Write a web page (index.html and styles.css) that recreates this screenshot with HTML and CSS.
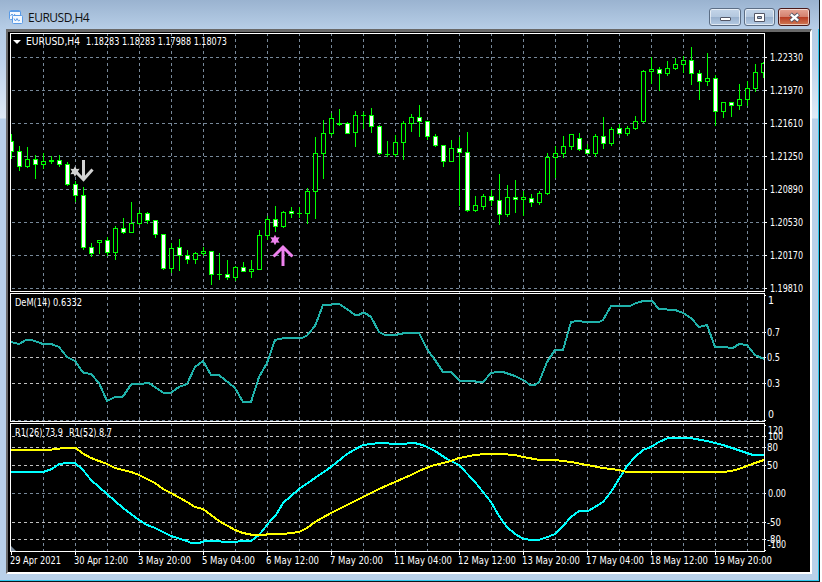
FILE: index.html
```
<!DOCTYPE html>
<html lang="en">
<head>
    <meta charset="UTF-8">
    <meta name="viewport" content="width=device-width, initial-scale=1.0">
    <title>EURUSD,H4</title>
    <link rel="stylesheet" href="styles.css">
</head>
<body>
    <div class="window">
        <div class="titlebar">
            <svg class="app-icon" width="14" height="14" viewBox="0 0 14 14">
                <rect x="0.5" y="0.5" width="11" height="9" rx="1" fill="#f4f9ff" stroke="#5a9be6"/>
                <path d="M1 1.500h10" stroke="#5a9be6"/>
                <path d="M1.500 6l1.500-2 1.500 2 1.500-2" fill="none" stroke="#5a9be6"/>
                <rect x="3.500" y="5.500" width="10" height="8" rx="1" fill="#f4f9ff" stroke="#5a9be6"/>
                <path d="M5 8.500l1.500 2.500 1.500-2.500 1.500 2.500 1.500-1" fill="none" stroke="#5a9be6"/>
            </svg>
            <span class="title">EURUSD,H4</span>
            <div class="buttons">
                <button class="btn" aria-label="Minimize">
                    <svg width="13" height="11" viewBox="0 0 13 11"><rect x="1.500" y="5.500" width="10" height="3" rx="0.500" fill="#fff" stroke="#535666"/></svg>
                </button>
                <button class="btn" aria-label="Maximize">
                    <svg width="13" height="11" viewBox="0 0 13 11"><path d="M1.500 1.500h10v8h-10zM4.500 4.500v2h4v-2z" fill="#fff" fill-rule="evenodd" stroke="#535666"/></svg>
                </button>
                <button class="btn close" aria-label="Close">
                    <svg width="13" height="11" viewBox="0 0 13 11"><path d="M2.500 2l8 7M10.500 2l-8 7" stroke="#535666" stroke-width="4"/><path d="M2.800 2.300l7.400 6.400M10.200 2.300l-7.400 6.400" stroke="#fff" stroke-width="2.300"/></svg>
                </button>
            </div>
        </div>
        <div class="client">
            <svg class="chart" id="chart" width="802" height="540" viewBox="8 32 802 540"></svg>
        </div>
    </div>
    <script src="chart.js"></script>
</body>
</html>
```
FILE: styles.css
```
body {
    margin: 0;
    background: #fff;
    overflow: hidden;
}

.window {
    box-sizing: border-box;
    width: 820px;
    height: 582px;
    padding-left: 6px;
    border-right: 1px solid #101418;
    border-bottom: 1px solid #101418;
    box-shadow: inset -1px -1px 0 #2fc8ee;
    background: linear-gradient(#9ab3d0 0, #b5cce5 28px, #bdd2ea 60px, #dfeaf6 118px, #b9d1ea 119px);
}

.titlebar {
    display: flex;
    align-items: center;
    height: 29px;
    padding: 0 9px 0 3px;
    background: linear-gradient(#9ab3d0, #b7cee7);
}

.app-icon {
    margin-top: 5px;
}

.title {
    margin: 6px 0 0 5px;
    font: 12px "Open Sans", "Noto Sans", sans-serif;
    letter-spacing: -0.5px;
    color: #111;
}

.buttons {
    display: flex;
    gap: 3px;
    margin-left: auto;
    padding-top: 5px;
}

.btn {
    display: flex;
    align-items: center;
    justify-content: center;
    box-sizing: border-box;
    width: 32px;
    height: 18px;
    padding: 0;
    border: 1px solid #5c6e85;
    border-radius: 3px;
    box-shadow: inset 0 0 0 1px rgba(255, 255, 255, 0.6);
    background: linear-gradient(#c4d5e9 0, #b4c8df 48%, #98b0cd 50%, #b5cbe3 100%);
}

.btn:nth-child(2) {
    width: 31px;
}

.close {
    border-color: #4a1a1a;
    background: linear-gradient(#e6a595 0, #d4816f 48%, #b83a22 50%, #cf7a55 100%);
}

.client {
    width: 802px;
    height: 540px;
    border: 2px solid #fff;
    border-top: 3px solid #696969;
    border-left-color: #696969;
    background: #000;
}

.chart {
    display: block;
    font-family: "DejaVu Sans Condensed", "DejaVu Sans", sans-serif;
    font-size: 11px;
    fill: #fff;
}

.grid {
    stroke: #778899;
    stroke-dasharray: 3 3;
}

.level {
    stroke: #c0c0c0;
    stroke-dasharray: 3 3;
}

.grid, .level, .frame, .tick, .wick, .up, .down {
    fill: none;
    shape-rendering: crispEdges;
}

.frame, .tick {
    stroke: #fff;
}

.wick, .up, .down {
    stroke: #0f0;
}

.up {
    fill: #000;
}

.down {
    fill: #fff;
}

.line {
    fill: none;
    stroke-width: 2;
    shape-rendering: crispEdges;
}

.dem {
    stroke: #20b2aa;
}

.fast {
    stroke: #0ff;
}

.slow {
    stroke: #ff0;
}

.sell {
    stroke: #d3d3d3;
    fill: #d3d3d3;
}

.buy {
    stroke: #ee82ee;
    fill: #ee82ee;
}

.arrow {
    fill: none;
    stroke-width: 3;
}

.star {
    stroke: none;
}
```
FILE: chart.js
```
const chart = document.getElementById('chart');

function add(tag, attrs, text) {
    const el = document.createElementNS('http://www.w3.org/2000/svg', tag);
    for (const key in attrs) {
        el.setAttribute(key, attrs[key]);
    }
    if (text) {
        el.textContent = text;
    }
    chart.appendChild(el);
    return el;
}

function hline(cls, y, x1 = 12, x2 = 764) {
    add('path', { class: cls, d: `M${x1} ${y + 0.5}H${x2}` });
}

function vline(cls, x, y1, y2) {
    add('path', { class: cls, d: `M${x + 0.5} ${y1}V${y2}` });
}

function label(text, x, y, width) {
    add('text', { x: x, y: y, textLength: width, lengthAdjust: 'spacingAndGlyphs' }, text);
}

// top and bottom of the three panes
const panes = [[33, 291], [293, 421], [423, 551]];

for (let x = 43; x < 764; x += 32) {
    vline('grid', x, 33, 551);
}

const prices = ['1.22330', '1.21970', '1.21610', '1.21250', '1.20890', '1.20530', '1.20170', '1.19810'];
prices.forEach((price, i) => {
    const y = 57 + i * 33;
    hline('grid', y);
    hline('tick', y, 765, 767);
    label(price, 770, y + 4, 33);
});

hline('grid', 420);
hline('grid', 493);
[332, 357, 383, 436, 447, 465, 522, 539].forEach(y => hline('level', y));
[295, 332, 357, 383, 420, 425, 436, 447, 465, 493, 522, 539, 550].forEach(y => hline('tick', y, 765, 766));

// high, body top, body bottom, low; 1 = rising
const candles = [
    [134,141,152,159,0], [146,151,167,171,0], [147,159,167,168,1], [155,159,165,179,0], [153,161,165,169,1],
    [156,160,162,164,1], [155,160,165,167,0], [162,164,185,186,0], [181,184,196,202,0], [187,195,248,250,0],
    [243,247,254,257,0], [240,240,243,254,1], [237,240,253,256,0], [226,228,253,260,1], [218,228,233,234,0],
    [202,223,233,233,1], [210,213,224,225,1], [212,213,221,224,0], [220,220,235,238,0], [234,234,269,270,0],
    [243,248,269,273,1], [239,247,256,271,0], [250,255,260,264,0], [252,253,260,264,1], [247,251,254,256,1],
    [251,251,275,285,0], [253,274,275,280,1], [260,274,278,280,0], [266,267,278,281,1], [262,267,272,272,0],
    [260,269,272,278,1], [230,235,270,270,1], [216,219,236,240,1], [206,219,227,232,0], [211,212,227,228,1],
    [207,211,214,218,0], [207,213,214,218,1], [188,191,214,224,1], [137,153,192,219,1], [120,133,154,179,1],
    [113,118,134,136,1], [109,123,125,126,1], [122,123,134,134,0], [111,115,133,147,1], [112,115,116,129,1],
    [108,115,127,133,0], [125,126,154,155,0], [141,154,155,157,1], [135,142,155,157,1], [121,123,143,160,1],
    [114,117,124,132,1], [105,117,122,137,0], [121,121,137,140,0], [134,136,146,147,0], [145,145,162,167,0],
    [140,148,162,162,1], [137,148,153,206,0], [132,152,211,212,0], [196,205,211,212,1], [194,196,207,210,1],
    [190,196,201,206,0], [174,200,215,225,0], [185,197,215,217,1], [180,197,200,213,0], [191,197,200,216,1],
    [194,198,203,207,0], [191,193,203,205,1], [153,157,194,195,1], [146,153,158,178,1], [136,146,154,158,1],
    [134,134,147,150,1], [133,138,150,151,0], [144,149,154,154,0], [134,136,154,157,1], [117,136,144,149,0],
    [127,129,144,146,1], [124,128,134,135,0], [126,128,134,136,1], [116,121,129,130,1], [70,71,122,123,1],
    [57,69,72,84,1], [67,69,74,91,0], [61,68,74,76,1], [58,64,69,70,1], [56,60,65,73,1],
    [47,60,74,85,0], [70,73,82,100,0], [53,78,82,86,1], [75,78,112,126,0], [102,102,112,118,1],
    [102,102,106,117,0], [84,99,106,110,1], [81,88,100,106,1], [64,72,89,92,1], [62,63,73,78,1]
];

const clip = add('clipPath', { id: 'plot' });
clip.innerHTML = '<rect x="11" y="33" width="753" height="519"/>';

candles.forEach(([high, top, bottom, low, rising], i) => {
    const x = 11 + i * 8;
    add('path', { class: 'wick', 'clip-path': 'url(#plot)', d: `M${x + 0.5} ${high}V${low}` });
    if (bottom - top < 2) {
        add('path', { class: 'wick', d: `M${x - 2} ${top + 0.5}h5` });
    } else {
        add('rect', {
            class: rising ? 'up' : 'down', 'clip-path': 'url(#plot)',
            x: x - 1.5, y: top + 0.5, width: 4, height: bottom - top - 1
        });
    }
});

function series(cls, points) {
    add('polyline', { class: 'line ' + cls, 'clip-path': 'url(#plot)', points: points });
}

series('dem', '11,342 19,344 26,340 33,340.5 43,344 51,344 59,347 67,357 75,361 83,372.5 91,374 99,383 107,401 115,397 123,396.5 131,384.5 139,384 149,383 163,392.5 171,392.5 179,387 187,384 195,367 203,361 211,375 219,375 235,388 243,402 251,402 259,377 267,363 275,340 284,338 302,338 307,335.5 315,326 323,305 331,305 333,304 339,304 347,309 355,315 359,315 362,313 365,313 371,317 379,332 385,335 395,335 405,333 419,333 427,349 435,360 443,372 451,372 460,381 475,381 476,382 483,382 491,373 497,372 503,372 515,376 525,381 530,385 535,385 539,382 547,362 555,350 563,350 571,322 577,321 587,322 599,322 603,320 611,306 630,306 635,303.5 643,301 652,301 659,309 675,310 683,313 691,318 699,327 707,325 715,347 723,347 733,348 739,344 747,345 755,355 764,359');
series('fast', '11,472 43,472 52,469 59,464 68,463 75,463 83,470 91,480 107,494 123,508 139,520 147,525 155,528 171,536 187,541 191,543 199,543 205,541 218,541 224,542 236,542 240,541 251,541 259,535 271,520 276,515 283,503 299,489 315,478 331,467 347,454 363,445 371,444 379,443 387,443 391,444 406,444 408,443 414,443 419,444 425,446 435,451 447,459 459,465 475,482 483,492 491,502 499,516 507,527 515,534 523,538.5 531,540 538,540 545,538 555,534 563,526 571,517 579,511 588,511 595,507 603,502 611,492 619,479 627,466 635,457 643,450 651,447 659,442 668,438 690,438 707,441 723,445 735,449 747,453 753,455 764,455');
series('slow', '11,450 51,450 53,449 68,448 76,448 82,453 91,458 107,464 115,468 123,470 131,472 139,475 155,483 163,489 171,493 187,502 195,507 203,509 219,521 235,530 243,533 253,535 265,535 268,534 283,534 299,532 307,528 315,522 331,513 347,505 363,497 379,489 395,482 411,475 419,471 431,466 443,463 451,461 459,458 475,455 485,454 500,454 515,455 523,457 540,460 555,460 571,462 587,465 603,468 619,470 627,472 723,472 731,471 739,469 747,466 755,463 764,460');

for (const [top, bottom] of panes) {
    add('rect', { class: 'frame', x: 10.5, y: top + 0.5, width: 754, height: bottom - top });
}

// signals
function star(cls, cx, cy) {
    let points = '';
    for (let i = 0; i < 12; i++) {
        const r = i % 2 ? 2.9 : 5.3;
        const a = i * Math.PI / 6;
        points += `${(cx + r * Math.sin(a)).toFixed(1)},${(cy - r * Math.cos(a)).toFixed(1)} `;
    }
    add('polygon', { class: cls + ' star', points: points });
}

add('path', { class: 'sell arrow', d: 'M83.5 160V179M75 171L83.5 179.500L92.500 169.500' });
star('sell', 75, 171.5);
add('path', { class: 'buy arrow', d: 'M283 266V247M273.500 256.500L283 247L292.500 256.500' });
star('buy', 275, 240);

add('path', { d: 'M13 40h8l-4 4z' });
add('path', { d: 'M11 546v5h5z', fill: '#778899' });

label('EURUSD,H4', 26, 45, 54);
label('1.18283 1.18283 1.17988 1.18073', 86, 45, 141);
label('DeM(14) 0.6332', 15, 306, 67);
label('R1(26) 73.9', 15, 436, 48);
label('R1(52) 8.7', 69, 436, 43);

label('1', 768, 304, 6);
label('0.7', 767, 336, 13);
label('0.5', 767, 361, 13);
label('0.3', 767, 387, 13);
label('0', 768, 418, 6);
label('120', 768, 434, 15);
label('100', 768, 440, 15);
label('80', 767, 451, 11);
label('50', 767, 469, 11);
label('0.00', 768, 497, 18);
label('-50', 767, 526, 14);
label('-80', 767, 543, 14);
label('-100', 768, 548, 18);

const dates = [
    ['29 Apr 2021', 51], ['30 Apr 12:00', 54], ['3 May 20:00', 53], ['5 May 04:00', 53],
    ['6 May 12:00', 53], ['7 May 20:00', 53], ['11 May 04:00', 58], ['12 May 12:00', 58],
    ['13 May 20:00', 58], ['17 May 04:00', 58], ['18 May 12:00', 58], ['19 May 20:00', 58]
];
dates.forEach(([date, width], i) => {
    vline('tick', 11 + i * 64, 552, 555);
    label(date, 10 + i * 64, 564, width);
});
```
